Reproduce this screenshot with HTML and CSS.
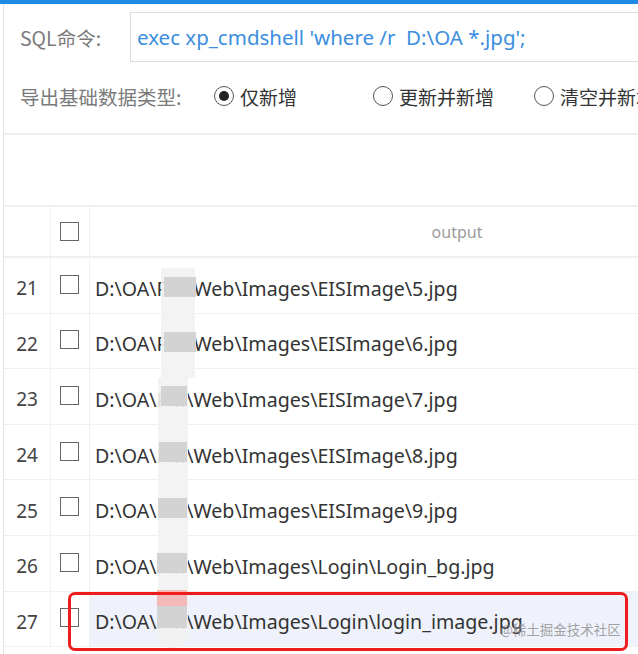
FILE: index.html
```html
<!DOCTYPE html>
<html>
<head>
<meta charset="utf-8">
<link rel="stylesheet" href="styles.css">
</head>
<body>
<div class="topbar"></div>
<div class="panel">
  <div class="form">
    <div class="row-sql">
      <span class="label">SQL命令:</span>
      <div class="input">exec xp_cmdshell 'where /r&nbsp; D:\OA *.jpg';</div>
    </div>
    <div class="row-radio">
      <span class="label">导出基础数据类型:</span>
      <span class="radio checked"><i></i>仅新增</span>
      <span class="radio"><i></i>更新并新增</span>
      <span class="radio"><i></i>清空并新增</span>
    </div>
  </div>
  <div class="toolbar"></div>
  <div class="grid">
    <div class="tr head">
      <div class="c-num"></div>
      <div class="c-chk"><span class="box"></span></div>
      <div class="c-out center">output</div>
    </div>
    <div class="tr"><div class="c-num">21</div><div class="c-chk"><span class="box"></span></div><div class="c-out">D:\OA\PM\Web\Images\EISImage\5.jpg</div></div>
    <div class="tr"><div class="c-num">22</div><div class="c-chk"><span class="box"></span></div><div class="c-out">D:\OA\PM\Web\Images\EISImage\6.jpg</div></div>
    <div class="tr"><div class="c-num">23</div><div class="c-chk"><span class="box"></span></div><div class="c-out">D:\OA\PM\Web\Images\EISImage\7.jpg</div></div>
    <div class="tr"><div class="c-num">24</div><div class="c-chk"><span class="box"></span></div><div class="c-out">D:\OA\PM\Web\Images\EISImage\8.jpg</div></div>
    <div class="tr"><div class="c-num">25</div><div class="c-chk"><span class="box"></span></div><div class="c-out">D:\OA\PM\Web\Images\EISImage\9.jpg</div></div>
    <div class="tr"><div class="c-num">26</div><div class="c-chk"><span class="box"></span></div><div class="c-out">D:\OA\PM\Web\Images\Login\Login_bg.jpg</div></div>
    <div class="tr sel"><div class="c-num">27</div><div class="c-chk"><span class="box"></span></div><div class="c-out">D:\OA\PM\Web\Images\Login\login_image.jpg</div></div>
  </div>
</div>
<div class="blur-strip"></div>
<div class="blur-strip lower"></div>
<div class="blk b1"></div>
<div class="blk b2"></div>
<div class="blk b3"></div>
<div class="blk b4"></div>
<div class="blk b5"></div>
<div class="blk b6"></div>
<div class="blk b7"></div>
<div class="blk pink"></div>
<div class="redbox"></div>
<div class="watermark">@稀土掘金技术社区</div>
</body>
</html>
```
FILE: styles.css
```css
html, body {
  margin: 0;
  padding: 0;
  background: #fff;
  overflow: hidden;
  width: 638px;
  height: 654px;
  font-family: "Noto Sans", "Noto Sans CJK SC", sans-serif;
  color: #333;
}
.topbar {
  height: 4px;
  background: #1e8ae6;
}
.panel {
  margin-left: 3px;
  border-left: 1px solid #e2e2e2;
  width: 900px;
  height: 650px;
}
.form {
  padding-left: 16px;
  border-bottom: 2px solid #efefef;
  height: 129px;
}
.row-sql {
  display: flex;
  align-items: center;
  padding-top: 8px;
}
.label {
  font-family: "Noto Sans CJK SC", sans-serif;
  font-size: 19.5px;
  color: #7a7a7a;
  width: 110px;
  flex: none;
}
.input {
  height: 50px;
  box-sizing: border-box;
  border: 1px solid #dcdcdc;
  border-right: none;
  flex: 1;
  display: flex;
  align-items: center;
  padding-left: 6px;
  font-size: 20.5px;
  color: #3b8ee0;
  white-space: pre;
}
.row-radio {
  display: flex;
  align-items: center;
  height: 44px;
  margin-top: 12px;
}
.row-radio .label {
  width: 194px;
  font-size: 19.5px;
}
.radio {
  display: inline-flex;
  align-items: center;
  font-family: "Noto Sans CJK SC", sans-serif;
  font-size: 19px;
  color: #333;
  margin-right: 40px;
  white-space: nowrap;
}
.radio i {
  width: 20px;
  height: 20px;
  border: 1.5px solid #555;
  border-radius: 50%;
  margin-right: 6px;
  box-sizing: border-box;
  position: relative;
}
.radio.checked i::after {
  content: "";
  position: absolute;
  left: 3.5px;
  top: 3.5px;
  width: 10px;
  height: 10px;
  background: #222;
  border-radius: 50%;
}
.radio.checked { margin-right: 76px; }
.toolbar {
  height: 70px;
  border-bottom: 2px solid #f0f0f0;
}
.tr {
  display: flex;
  height: 55.6px;
  border-bottom: 1px solid #f0f0f0;
  box-sizing: border-box;
}
.tr.head {
  height: 51px;
  border-bottom: 2px solid #efefef;
}
.c-num {
  width: 47px;
  border-right: 1px solid #f0f0f0;
  display: flex;
  align-items: center;
  justify-content: center;
  font-size: 19px;
  color: #444;
  padding-top: 6px;
  box-sizing: border-box;
}
.c-chk {
  width: 39px;
  border-right: 1px solid #f0f0f0;
  display: flex;
  align-items: center;
  padding-left: 9px;
  box-sizing: border-box;
}
.box {
  width: 19px;
  height: 19px;
  border: 1.5px solid #666;
  box-sizing: border-box;
  margin-top: -2px;
}
.head .box { margin-top: 0; }
.c-out {
  width: 734px;
  box-sizing: border-box;
  display: flex;
  align-items: center;
  padding-left: 5px;
  padding-top: 6px;
  font-size: 19.6px;
  color: #333;
  white-space: nowrap;
}
.c-out.center {
  justify-content: center;
  font-size: 16px;
  color: #9a9a9a;
  padding: 0;
}
.tr.sel .c-out { background: #eff2fa; }
.blur-strip {
  position: absolute;
  left: 161px;
  top: 268px;
  width: 34px;
  height: 110px;
  background: rgba(242, 242, 242, 0.9);
}
.blur-strip.lower {
  left: 158px;
  top: 378px;
  width: 30px;
  height: 270px;
  border-radius: 0 0 14px 14px;
}
.blk {
  position: absolute;
  width: 32px;
  height: 20px;
  background: #d3d3d3;
}
.b1 { left: 164px; top: 277px; }
.b2 { left: 164px; top: 332px; }
.b3 { left: 161px; top: 386px; width: 26px; }
.b4 { left: 159px; top: 442px; width: 28px; }
.b5 { left: 158px; top: 498px; width: 29px; }
.b6 { left: 157px; top: 553px; width: 30px; }
.b7 { left: 157px; top: 606px; height: 22px; width: 30px; }
.pink { left: 157px; top: 590px; height: 16px; width: 30px; background: #f3b8b8; }
.redbox {
  position: absolute;
  left: 68px;
  top: 592px;
  width: 560px;
  height: 59px;
  box-sizing: border-box;
  border: 3px solid #ee1c1c;
  border-radius: 7px;
}
.watermark {
  position: absolute;
  left: 500px;
  top: 619px;
  font-family: "Noto Sans CJK SC", sans-serif;
  font-size: 13.5px;
  color: rgba(140, 140, 140, 0.8);
}
```
